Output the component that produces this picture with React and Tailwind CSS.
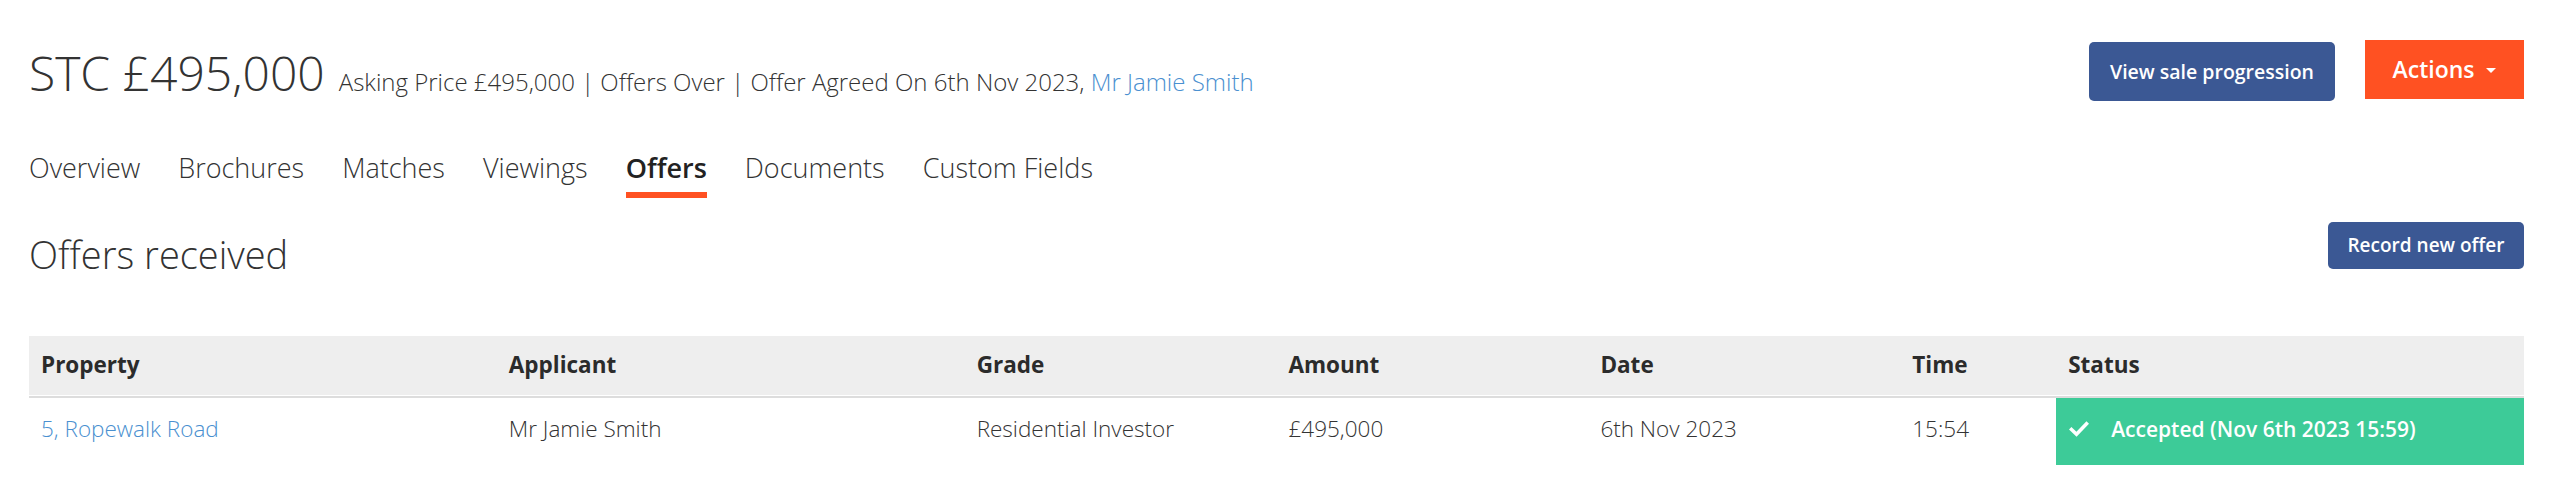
import React from "react";

function Check() {
  return (
    <svg width="20" height="16" viewBox="0 0 20 16" className="shrink-0">
      <path d="M2.5 8.5 L7.5 13.2 L17.5 2.8" fill="none" stroke="white" strokeWidth="3.6" strokeLinecap="square" />
    </svg>
  );
}

const tabs = ["Overview", "Brochures", "Matches", "Viewings", "Offers", "Documents", "Custom Fields"];

export default function App() {
  return (
    <div className="min-h-[502px] bg-white pl-[29px] pr-[32px] pt-[40px] text-[#333333] font-['Open_Sans',sans-serif]">
      <div className="flex items-start justify-between">
        <div className="mt-[3px] flex items-baseline">
          <span className="text-[48px] font-light leading-[60px]">STC £495,000</span>
          <span className="ml-[14px] text-[24px] font-light">
            Asking Price £495,000 | Offers Over | Offer Agreed On 6th Nov 2023,{" "}
            <a className="text-[#4a90d0]">Mr Jamie Smith</a>
          </span>
        </div>
        <div className="flex items-start gap-[30px]">
          <button className="mt-[2px] h-[59px] w-[246px] rounded-[5px] bg-[#3b5894] text-[19.5px] font-semibold text-white">
            View sale progression
          </button>
          <button className="flex h-[59px] w-[159px] items-center justify-center gap-[12px] bg-[#ff5122] text-[23px] font-semibold text-white">
            <span>Actions</span>
            <span className="mt-[2px] h-0 w-0 border-x-[5px] border-t-[5px] border-x-transparent border-t-white"></span>
          </button>
        </div>
      </div>

      <div className="mt-[45px] flex gap-[38px]">
        {tabs.map((t) => (
          <div key={t} className="flex flex-col">
            <span className={t === "Offers" ? "text-[27px] font-semibold leading-[40px] text-[#222222]" : "text-[27px] font-light leading-[40px] text-[#333333]"}>
              {t}
            </span>
            <span className={t === "Offers" ? "mt-[4px] h-[6px] bg-[#ff5122]" : "mt-[4px] h-[6px]"}></span>
          </div>
        ))}
      </div>

      <div className="mt-[24px] flex items-start justify-between">
        <h2 className="mt-[8px] text-[38px] font-light leading-[48px]">Offers received</h2>
        <button className="h-[47px] w-[196px] rounded-[5px] bg-[#3b5894] text-[19px] font-semibold text-white">
          Record new offer
        </button>
      </div>

      <table className="mt-[58px] w-full table-fixed border-collapse text-[22.5px]">
        <colgroup>
          <col className="w-[18.75%]" />
          <col className="w-[18.75%]" />
          <col className="w-[12.5%]" />
          <col className="w-[12.5%]" />
          <col className="w-[12.5%]" />
          <col className="w-[6.25%]" />
          <col className="w-[18.75%]" />
        </colgroup>
        <thead>
          <tr className="bg-[#eeeeee]">
            {["Property", "Applicant", "Grade", "Amount", "Date", "Time", "Status"].map((h) => (
              <th key={h} className="h-[61px] border-b-[2px] border-[#dddddd] px-[12px] pb-[2px] text-left align-middle font-bold leading-[32px] text-[#2b2b2b] shadow-[inset_0_-1px_0_#ffffff]">
                {h}
              </th>
            ))}
          </tr>
        </thead>
        <tbody>
          <tr className="font-light">
            <td className="h-[68px] px-[12px] pb-[6px] align-middle leading-[32px] text-[#4a90d0]">5, Ropewalk Road</td>
            <td className="px-[12px] pb-[6px] align-middle leading-[32px]">Mr Jamie Smith</td>
            <td className="px-[12px] pb-[6px] align-middle leading-[32px]">Residential Investor</td>
            <td className="px-[12px] pb-[6px] align-middle leading-[32px]">£495,000</td>
            <td className="px-[12px] pb-[6px] align-middle leading-[32px]">6th Nov 2023</td>
            <td className="px-[12px] pb-[6px] align-middle leading-[32px]">15:54</td>
            <td className="bg-[#3dcb98] px-[13px] pb-[6px] align-middle font-semibold leading-[32px] text-white">
              <div className="flex items-center gap-[22px] text-[21px]">
                <Check />
                <span>Accepted (Nov 6th 2023 15:59)</span>
              </div>
            </td>
          </tr>
        </tbody>
      </table>
    </div>
  );
}
